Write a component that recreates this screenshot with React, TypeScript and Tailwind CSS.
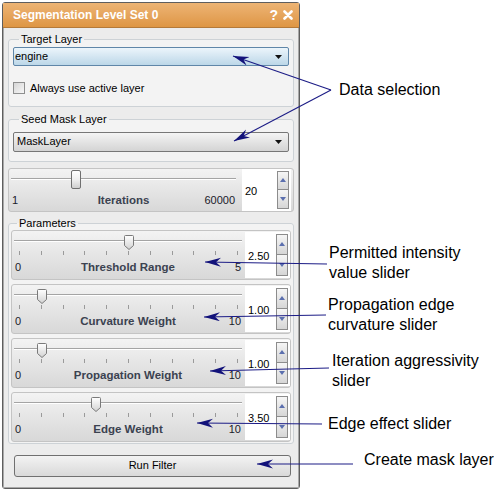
import React from 'react';

const ui = "font-['Liberation_Sans',Arial,sans-serif]";

function Tri({ up, color = '#5b6fae' }: { up?: boolean; color?: string }) {
  return (
    <svg width="6" height="4" viewBox="0 0 6 4">
      <path d={up ? 'M0 4 L3 0 L6 4 Z' : 'M0 0 L6 0 L3 4 Z'} fill={color} />
    </svg>
  );
}

function SpinBox({ value, width }: { value: string; width: string }) {
  return (
    <div className={`flex items-stretch bg-white pl-[3px] pr-[2px] py-[2px] ${width}`}>
      <span className="flex flex-1 items-center pt-[4px] text-[11px] text-black">{value}</span>
      <div className="flex w-[12px] flex-col">
        <div className="flex flex-1 items-center justify-center border border-[#8c8c8c] bg-gradient-to-b from-[#f6f6f6] to-[#d6d6d6]">
          <Tri up />
        </div>
        <div className="flex flex-1 items-center justify-center border border-t-0 border-[#8c8c8c] bg-gradient-to-b from-[#f6f6f6] to-[#d6d6d6]">
          <Tri />
        </div>
      </div>
    </div>
  );
}

function Groove() {
  return <div className="h-[2px] border-t border-b border-t-[#a4a4a4] border-b-white" />;
}

function PointHandle({ left }: { left: number }) {
  return (
    <svg className="absolute top-0" style={{ left }} width="10" height="15" viewBox="0 0 10 15">
      <defs>
        <linearGradient id="hg" x1="0" y1="0" x2="0" y2="1">
          <stop offset="0" stopColor="#ffffff" />
          <stop offset="1" stopColor="#d2d2d2" />
        </linearGradient>
      </defs>
      <path d="M1.5 0.5 H8.5 A1 1 0 0 1 9.5 1.5 V10.5 L5 14.5 L0.5 10.5 V1.5 A1 1 0 0 1 1.5 0.5 Z" fill="url(#hg)" stroke="#7a7a7a" />
    </svg>
  );
}

function ParamSlider({ label, max, value }: { label: string; max: number; value: number }) {
  const left = 1 + (value / max) * 218;
  return (
    <div className="flex h-[50px] rounded-[3px] border border-[#c4c4c4] bg-gradient-to-b from-[#f3f3f3] to-[#d8d8d8] py-[1px] pl-[2px]">
      <div className="flex w-[228px] flex-col">
        <div className="relative mt-[3px] h-[16px]">
          <div className="pt-[5px]">
            <Groove />
          </div>
          <PointHandle left={left} />
        </div>
        <div className="flex h-[4px] justify-between pl-[5px] pr-[4px]">
          {Array.from({ length: 11 }).map((_, i) => (
            <div key={i} className="w-px bg-[#9a9a9a]" />
          ))}
        </div>
        <div className="mt-[5px] flex h-[14px] items-center px-[1px] text-[11px] leading-[14px]">
          <span className="flex-1 text-[#1a1a2a]">0</span>
          <span className="text-[11.5px] font-bold text-[#3b4250]">{label}</span>
          <span className="flex-1 text-right text-[#1a1a2a]">{max}</span>
        </div>
      </div>
      <div className="ml-[3px] flex">
        <SpinBox value={value.toFixed(2)} width="w-[45px]" />
      </div>
    </div>
  );
}

function Combo({ text, blue }: { text: string; blue?: boolean }) {
  return (
    <div
      className={`flex items-center rounded-[2px] border pr-[6px] text-[11px] ${
        blue
          ? 'h-[19px] border-[#5f86a8] bg-gradient-to-b from-[#ecf5fb] to-[#bcd7e8] pl-[1px]'
          : 'h-[20px] border-[#777777] bg-gradient-to-b from-[#f4f4f4] to-[#d4d4d4] pl-[3px]'
      }`}
    >
      <span className="flex-1 text-black">{text}</span>
      <svg width="7" height="4" viewBox="0 0 7 4">
        <path d="M0 0 H7 L3.5 4 Z" fill="#111" />
      </svg>
    </div>
  );
}

function Panel() {
  return (
    <div className={`ml-[2px] mt-[2px] flex w-[298px] flex-col rounded-[3px] border border-[#5e5e5e] bg-[#ececec] ${ui}`}>
      <div className="flex h-[25px] items-center border-b border-[#b47a3a] bg-gradient-to-b from-[#edb474] to-[#de9644] pl-[10px] pr-[6px] text-white">
        <span className="flex-1 text-[12px] font-bold">Segmentation Level Set 0</span>
        <span className="mr-[5px] text-[14px] font-bold">?</span>
        <svg width="10" height="10" viewBox="0 0 10 10">
          <path d="M1.5 1.5 L8.5 8.5 M8.5 1.5 L1.5 8.5" stroke="#fff" strokeWidth="2.6" strokeLinecap="round" />
        </svg>
      </div>
      <div className="flex flex-col border-x border-b border-[#a8a8a8] px-[4px] pb-[10px]">
        <fieldset className="mt-[5px] rounded-[3px] border border-[#cdd2d6] bg-[#f3f3f3] px-[4px] pb-[9px]">
          <legend className="ml-[6px] h-[13px] px-[2px] text-[11px] leading-[13px] text-black">Target Layer</legend>
          <div className="mt-[1px]">
            <Combo text="engine" blue />
          </div>
          <div className="mt-[14px] flex items-center gap-[5px]">
            <div className="h-[12px] w-[12px] border border-[#8e8f8f] bg-gradient-to-br from-[#d6d6d6] to-[#f7f7f7]" />
            <span className="text-[11px] text-black">Always use active layer</span>
          </div>
        </fieldset>
        <fieldset className="mt-[6px] rounded-[3px] border border-[#cdd2d6] bg-[#f3f3f3] px-[4px] pb-[9px]">
          <legend className="ml-[6px] h-[13px] px-[2px] text-[11px] leading-[13px] text-black">Seed Mask Layer</legend>
          <div className="mt-[6px]">
            <Combo text="MaskLayer" />
          </div>
        </fieldset>
        <div className="mt-[6px] flex h-[44px] rounded-[3px] border border-[#c4c4c4] bg-gradient-to-b from-[#f3f3f3] to-[#d8d8d8] pl-[2px] pr-[2px]">
          <div className="flex w-[225px] flex-col">
            <div className="relative mt-[1px] h-[19px]">
              <div className="pt-[8px]">
                <Groove />
              </div>
              <div className="absolute left-[60px] top-0 h-[19px] w-[10px] rounded-[2px] border border-[#707070] bg-gradient-to-b from-white via-[#f0f0f0] to-[#cfcfcf]" />
            </div>
            <div className="mt-[4px] flex h-[14px] items-center px-[1px] text-[11px] leading-[14px]">
              <span className="flex-1 text-[#1a1a2a]">1</span>
              <span className="text-[11.5px] font-bold text-[#3b4250]">Iterations</span>
              <span className="flex-1 text-right text-[#1a1a2a]">60000</span>
            </div>
          </div>
          <div className="ml-[6px] flex">
            <SpinBox value="20" width="w-[49px]" />
          </div>
        </div>
        <fieldset className="mt-[5px] rounded-[3px] border border-[#cdd2d6] bg-[#f3f3f3] px-[2px] pb-[1px]">
          <legend className="ml-[6px] h-[13px] px-[2px] text-[11px] leading-[13px] text-black">Parameters</legend>
          <div className="flex flex-col gap-[4px]">
            <ParamSlider label="Threshold Range" max={5} value={2.5} />
            <ParamSlider label="Curvature Weight" max={10} value={1} />
            <ParamSlider label="Propagation Weight" max={10} value={1} />
            <ParamSlider label="Edge Weight" max={10} value={3.5} />
          </div>
        </fieldset>
        <button className="ml-[6px] mr-[3px] mt-[11px] flex h-[22px] items-center justify-center rounded-[3px] border border-[#707070] bg-gradient-to-b from-[#f3f3f3] to-[#d9d9d9] text-[11px] text-black">
          Run Filter
        </button>
      </div>
    </div>
  );
}

const callouts: { left: string; top: string; lines: string[] }[] = [
  { left: 'left-[339px]', top: 'top-[80px]', lines: ['Data selection'] },
  { left: 'left-[329px]', top: 'top-[243px]', lines: ['Permitted intensity', 'value slider'] },
  { left: 'left-[328px]', top: 'top-[295px]', lines: ['Propagation edge', 'curvature slider'] },
  { left: 'left-[332px]', top: 'top-[351px]', lines: ['Iteration aggressivity', 'slider'] },
  { left: 'left-[328px]', top: 'top-[414px]', lines: ['Edge effect slider'] },
  { left: 'left-[364px]', top: 'top-[450px]', lines: ['Create mask layer'] },
];

function Arrows() {
  const lines: [number, number, number, number][] = [
    [331, 90, 233, 56],
    [331, 90, 234, 141],
    [327, 264, 205, 262],
    [326, 315, 204, 317],
    [329, 368, 210, 371],
    [322, 424, 197, 423],
    [353, 464, 257, 464],
  ];
  return (
    <svg className="pointer-events-none absolute left-0 top-0" width="494" height="490">
      <defs>
        <marker id="ah" markerUnits="userSpaceOnUse" markerWidth="17" markerHeight="10" refX="16" refY="4.5" orient="auto">
          <path d="M0 0 L16 4.5 L0 9 L5 4.5 Z" fill="#12127a" />
        </marker>
      </defs>
      {lines.map(([x1, y1, x2, y2], i) => (
        <line key={i} x1={x1} y1={y1} x2={x2} y2={y2} stroke="#1c1c86" strokeWidth="1.1" markerEnd="url(#ah)" />
      ))}
    </svg>
  );
}

export default function App() {
  return (
    <div className={`relative h-[490px] w-[494px] overflow-hidden bg-white ${ui}`}>
      <Panel />
      <Arrows />
      {callouts.map((c, i) => (
        <div key={i} className={`absolute ${c.left} ${c.top} text-[16px] leading-[20px] text-black`}>
          {c.lines.map((l) => (
            <div key={l} className="whitespace-nowrap">
              {l}
            </div>
          ))}
        </div>
      ))}
    </div>
  );
}
